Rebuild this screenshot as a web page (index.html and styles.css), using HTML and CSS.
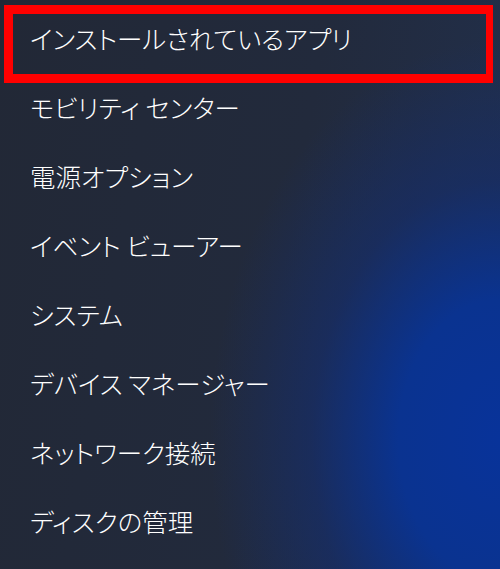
FILE: index.html
```html
<!DOCTYPE html>
<html>
<head>
    <meta charset="UTF-8">
    <title>Quick Link Menu</title>
    <link rel="stylesheet" href="styles.css">
</head>
<body>
    <div class="menu">
        <div class="highlight"></div>
        <div class="menu-item">インストールされているアプリ</div>
        <div class="menu-item">モビリティ センター</div>
        <div class="menu-item">電源オプション</div>
        <div class="menu-item">イベント ビューアー</div>
        <div class="menu-item">システム</div>
        <div class="menu-item">デバイス マネージャー</div>
        <div class="menu-item">ネットワーク接続</div>
        <div class="menu-item">ディスクの管理</div>
    </div>
</body>
</html>
```

FILE: styles.css
```css
html, body {
    margin: 0;
    padding: 0;
    height: 100%;
}

body {
    background-color: #222a3a;
    background-image:
        radial-gradient(ellipse 290px 400px at 500px 440px, #08339a 0%, #0a3390 35%, rgba(20, 45, 110, 0.6) 65%, rgba(34, 42, 58, 0) 100%),
        linear-gradient(100deg, #222836 0%, #222a3c 55%, #21304e 100%);
    font-family: "Noto Sans CJK JP", sans-serif;
    font-feature-settings: "palt";
    overflow: hidden;
}

.menu {
    position: relative;
    padding-top: 3px;
}

.menu-item {
    height: 69px;
    line-height: 69px;
    padding-left: 30px;
    font-size: 25.5px;
    font-weight: 300;
    color: #ffffff;
    white-space: nowrap;
}

.highlight {
    position: absolute;
    left: 4px;
    top: 5px;
    width: 473px;
    height: 60px;
    border: 9px solid #ff0000;
    border-right-width: 7px;
}
```
